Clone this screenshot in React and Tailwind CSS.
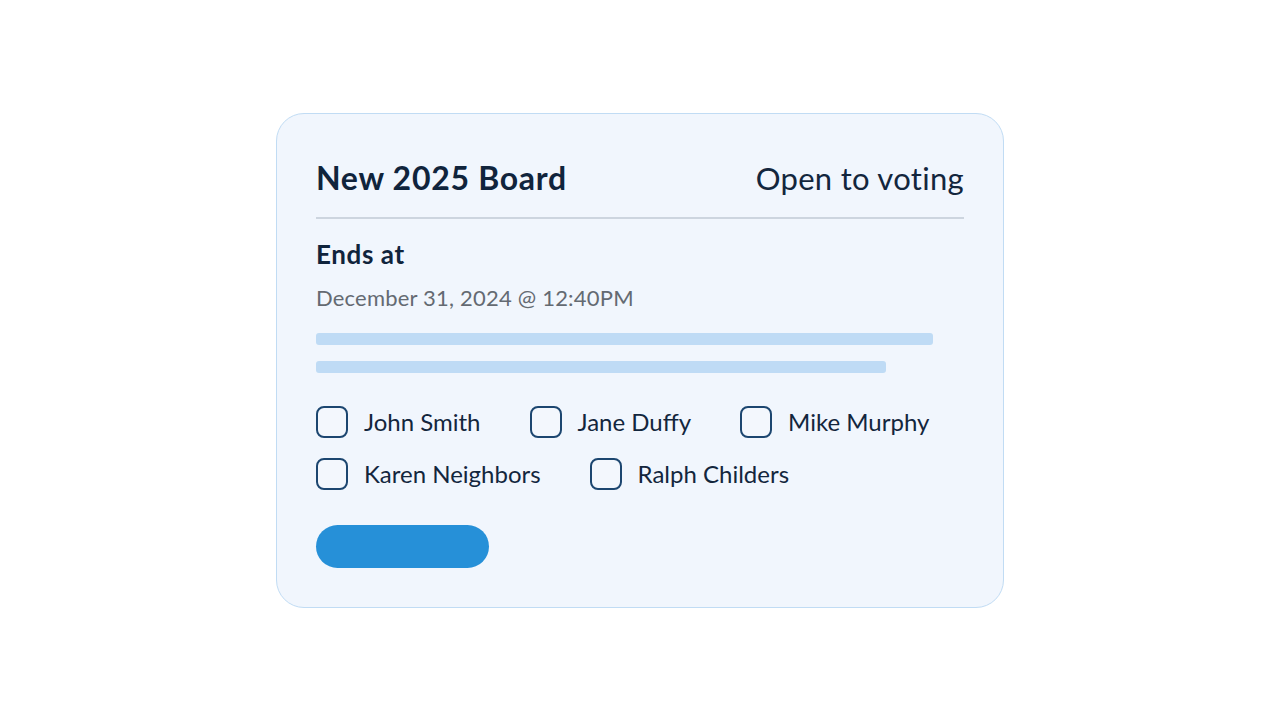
import React from "react";

const names = [
  ["John Smith", "Jane Duffy", "Mike Murphy"],
  ["Karen Neighbors", "Ralph Childers"],
];

function Item({ label }) {
  return (
    <div className="flex items-center gap-4">
      <span className="block w-8 h-8 rounded-[8px] border-2 border-[#1c4670] bg-[#f3f7fd]" />
      <span className="text-[24px] leading-8 text-[#13263d]">{label}</span>
    </div>
  );
}

export default function App() {
  return (
    <div
      className="w-full h-[720px] bg-white flex items-center justify-center"
      style={{ fontFamily: "Lato, 'Noto Sans', sans-serif" }}
    >
      <div className="w-[728px] rounded-[28px] border border-[#c1dcf4] bg-[#f1f6fd] p-[39px]">
        <div className="flex items-center justify-between pt-[5px] pb-[19px] border-b-2 border-[#cdd5df]">
          <h1 className="text-[32px] leading-10 font-bold tracking-[0.7px] text-[#10243c]">New 2025 Board</h1>
          <span className="text-[31px] leading-10 tracking-[0.3px] text-[#13263d]">Open to voting</span>
        </div>
        <div className="mt-[19px] text-[26px] leading-8 font-bold tracking-[0.6px] text-[#10243c]">Ends at</div>
        <div className="mt-[14px] text-[22px] leading-7 tracking-[0.2px] text-[#646a72]">December 31, 2024 @ 12:40PM</div>
        <div className="mt-[21px] flex flex-col gap-4">
          <div className="h-3 w-[617px] rounded-[3px] bg-[#bfdbf5]" />
          <div className="h-3 w-[570px] rounded-[3px] bg-[#bfdbf5]" />
        </div>
        <div className="mt-[33px] flex flex-col gap-5">
          {names.map((row, i) => (
            <div key={i} className="flex gap-[49px]">
              {row.map((n) => (
                <Item key={n} label={n} />
              ))}
            </div>
          ))}
        </div>
        <div className="mt-[35px] h-[43px] w-[173px] rounded-full bg-[#2690d8]" />
      </div>
    </div>
  );
}
